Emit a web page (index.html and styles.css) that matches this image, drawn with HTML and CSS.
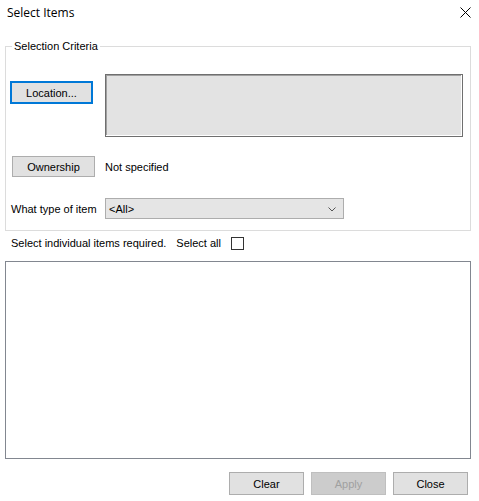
FILE: index.html
```html
<!DOCTYPE html>
<html lang="en">
<head>
<meta charset="utf-8">
<title>Select Items</title>
<link rel="stylesheet" href="styles.css">
</head>
<body>
<div class="dialog">
  <div class="titlebar">
    <span class="title">Select Items</span>
    <svg class="close-x" width="11" height="11" viewBox="0 0 11 11">
      <path d="M0.5 0.5 L10.5 10.5 M10.5 0.5 L0.5 10.5" stroke="#000" stroke-width="1" fill="none"/>
    </svg>
  </div>

  <fieldset class="group">
    <legend class="group-title">Selection Criteria</legend>
    <div class="row row-location">
      <button class="btn btn-focus btn-location">Location...</button>
      <div class="location-panel"></div>
    </div>
    <div class="row row-owner">
      <button class="btn btn-owner">Ownership</button>
      <span class="owner-value">Not specified</span>
    </div>
    <div class="row row-type">
      <span class="type-label">What type of item</span>
      <div class="combo">
        <span class="combo-value">&lt;All&gt;</span>
        <svg class="combo-arrow" width="8" height="5" viewBox="0 0 8 5">
          <path d="M0.5 0.5 L4 4 L7.5 0.5" stroke="#555" stroke-width="1" fill="none"/>
        </svg>
      </div>
    </div>
  </fieldset>

  <div class="select-row">
    <span class="select-text">Select individual items required.</span>
    <span class="select-all">Select all</span>
    <span class="checkbox"></span>
  </div>

  <div class="item-list"></div>

  <div class="actions">
    <button class="btn btn-action">Clear</button>
    <button class="btn btn-action btn-disabled">Apply</button>
    <button class="btn btn-action">Close</button>
  </div>
</div>
</body>
</html>
```

FILE: styles.css
```css
html, body {
  margin: 0;
  padding: 0;
  background: #ffffff;
}

.dialog {
  width: 479px;
  height: 501px;
  font-family: "Liberation Sans", Arial, sans-serif;
  font-size: 11px;
  color: #000;
  display: flex;
  flex-direction: column;
}

/* window caption */
.titlebar {
  height: 40px;
  display: flex;
  align-items: flex-start;
  justify-content: space-between;
  padding: 0 8px 0 7px;
  box-sizing: border-box;
}

.title {
  font-family: "Open Sans", "Noto Sans", sans-serif;
  font-size: 12px;
  line-height: 16px;
  margin-top: 5px;
}

.close-x {
  margin-top: 7px;
}

/* "Selection Criteria" group box */
.group {
  margin: 0 0 0 5px;
  width: 466px;
  box-sizing: border-box;
  border: 1px solid #dcdcdc;
  padding: 0 0 11px 4px;
  min-width: 0;
}

.group-title {
  margin-left: 2px;
  padding: 0 2px;
  line-height: 12px;
  height: 12px;
}

.row {
  display: flex;
}

.row-location {
  margin-top: 22px;
  align-items: flex-start;
}

.btn {
  font-family: "Liberation Sans", Arial, sans-serif;
  font-size: 11px;
  color: #000;
  background: #e1e1e1;
  border: 1px solid #adadad;
  padding: 0;
  margin: 0;
  height: 23px;
  box-sizing: border-box;
}

.btn-focus {
  border: 2px solid #0078d7;
}

.btn-location {
  width: 83px;
  height: 23px;
  margin-top: 7px;
}

.location-panel {
  width: 358px;
  height: 63px;
  margin-left: 12px;
  box-sizing: border-box;
  background: #e3e3e3;
  border: 1px solid #6f6f6f;
  box-shadow: inset -1px -1px 0 #ffffff, inset 1px 1px 0 #a0a0a0;
}

.row-owner {
  margin-top: 19px;
  align-items: center;
}

.btn-owner {
  width: 83px;
  height: 21px;
  margin-left: 2px;
}

.owner-value {
  margin-left: 10px;
}

.row-type {
  margin-top: 21px;
  align-items: center;
}

.type-label {
  width: 94px;
  margin-left: 1px;
}

.combo {
  width: 239px;
  height: 21px;
  box-sizing: border-box;
  border: 1px solid #adadad;
  background: #e5e5e5;
  display: flex;
  align-items: center;
  justify-content: space-between;
  padding: 0 7px 0 3px;
}

.combo-arrow {
  margin-top: 1px;
}

/* line under the group box */
.select-row {
  display: flex;
  align-items: center;
  height: 20px;
  margin-top: 2px;
  padding-left: 11px;
}

.select-all {
  margin-left: 10px;
}

.checkbox {
  width: 13px;
  height: 13px;
  box-sizing: border-box;
  border: 1px solid #333333;
  background: #fff;
  margin-left: 10px;
}

.item-list {
  margin: 8px 0 0 5px;
  width: 466px;
  height: 198px;
  box-sizing: border-box;
  border: 1px solid #828790;
  background: #fff;
}

.actions {
  display: flex;
  justify-content: flex-end;
  gap: 7px;
  padding-right: 11px;
  margin-top: 13px;
}

.btn-action {
  width: 75px;
  height: 23px;
}

.btn-disabled {
  background: #cccccc;
  border-color: #bfbfbf;
  color: #a0a0a0;
}
```
